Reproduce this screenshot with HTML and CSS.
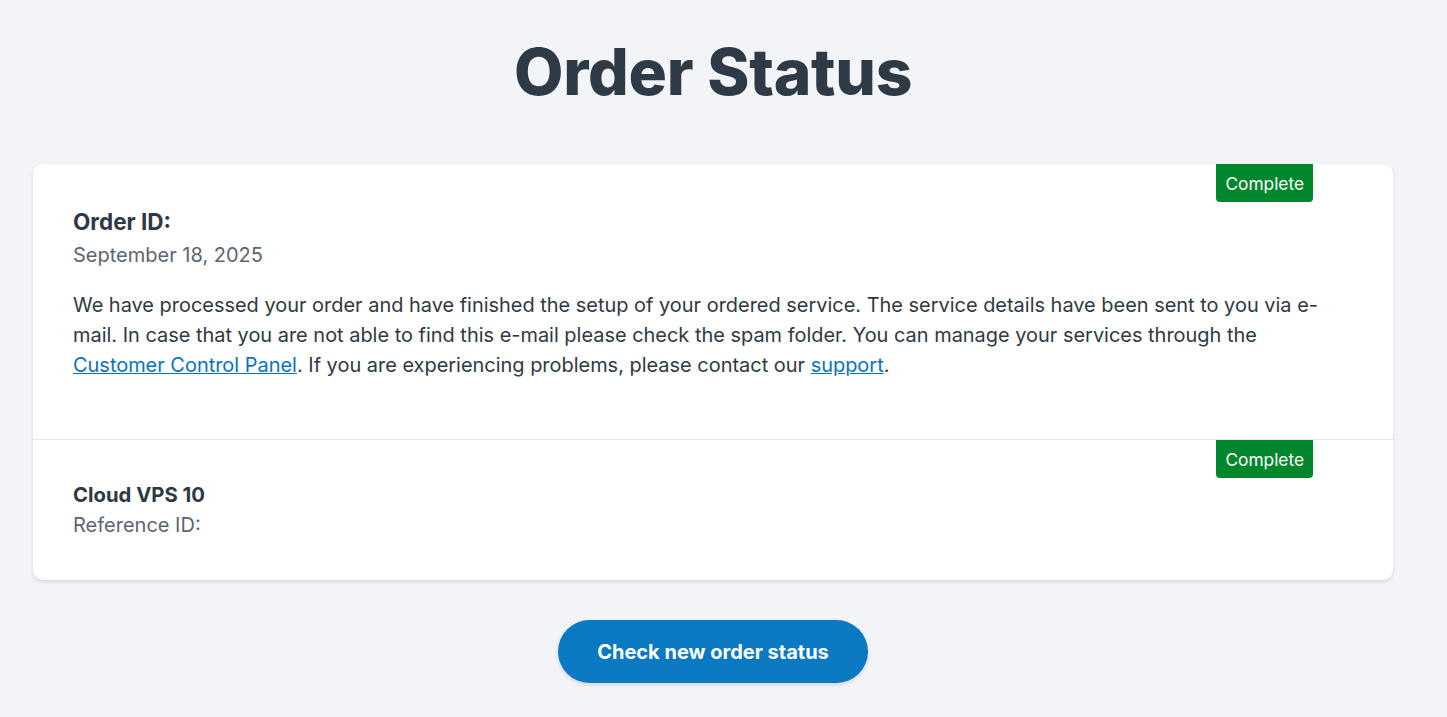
FILE: index.html
```html
<!DOCTYPE html>
<html lang="en">
<head>
<meta charset="utf-8">
<title>Order Status</title>
<link rel="stylesheet" href="styles.css">
</head>
<body>
<main class="page">
  <h1 class="title">Order Status</h1>
  <section class="card">
    <div class="card-section order">
      <span class="badge">Complete</span>
      <h2 class="order-id">Order ID:</h2>
      <p class="muted">September 18, 2025</p>
      <p class="message">We have processed your order and have finished the setup of your ordered service. The service details have been sent to you via e-mail. In case that you are not able to find this e-mail please check the spam folder. You can manage your services through the <a href="#">Customer Control Panel</a>. If you are experiencing problems, please contact our <a href="#">support</a>.</p>
    </div>
    <div class="card-section item">
      <span class="badge">Complete</span>
      <h3 class="item-name">Cloud VPS 10</h3>
      <p class="muted">Reference ID:</p>
    </div>
  </section>
  <div class="actions">
    <a class="button" href="#">Check new order status</a>
  </div>
</main>
</body>
</html>
```
FILE: styles.css
```css
* { box-sizing: border-box; }
html, body { margin: 0; padding: 0; }
body {
  background: #f3f4f8;
  font-family: Inter, "Noto Sans", sans-serif;
  color: #2f3945;
}
.page {
  width: 1426px;
  padding: 32px 33px 34px;
}
.title {
  margin: 0 0 52px;
  text-align: center;
  font-size: 64px;
  line-height: 80px;
  font-weight: 800;
  letter-spacing: -0.25px;
  color: #2f3a47;
}
.card {
  background: #fff;
  border-radius: 10px;
  box-shadow: 0 2px 4px rgba(0, 0, 0, 0.12);
}
.card-section {
  position: relative;
  padding: 40px 40px 40px;
}
.card-section.order {
  padding-bottom: 59px;
  border-bottom: 1px solid #e5e7eb;
}
.card-section.item {
  padding-top: 40px;
  padding-bottom: 40px;
}
.badge {
  position: absolute;
  top: 0;
  right: 80px;
  height: 38px;
  padding: 0 9px;
  display: flex;
  align-items: center;
  background: #00872b;
  color: #fff;
  font-size: 17.3px;
  border-radius: 0 0 4px 4px;
}
.order-id {
  margin: 0;
  font-size: 22.5px;
  line-height: 36px;
  font-weight: 700;
  color: #2f3945;
}
.muted {
  margin: 0;
  font-size: 20px;
  line-height: 30px;
  color: #5b6573;
}
.message {
  margin: 20px 0 0;
  font-size: 19.95px;
  line-height: 30px;
  color: #2f3945;
}
.message a {
  color: #0a72c0;
  text-decoration: underline;
}
.item-name {
  margin: 0;
  font-size: 20.3px;
  line-height: 30px;
  font-weight: 700;
  color: #2f3945;
}
.actions {
  display: flex;
  justify-content: center;
  margin-top: 40px;
}
.button {
  display: flex;
  align-items: center;
  justify-content: center;
  width: 310px;
  height: 63px;
  border-radius: 32px;
  background: #0b78c2;
  color: #fff;
  font-size: 20px;
  font-weight: 700;
  text-decoration: none;
  box-shadow: 0 2px 4px rgba(0, 0, 0, 0.12);
}
```
